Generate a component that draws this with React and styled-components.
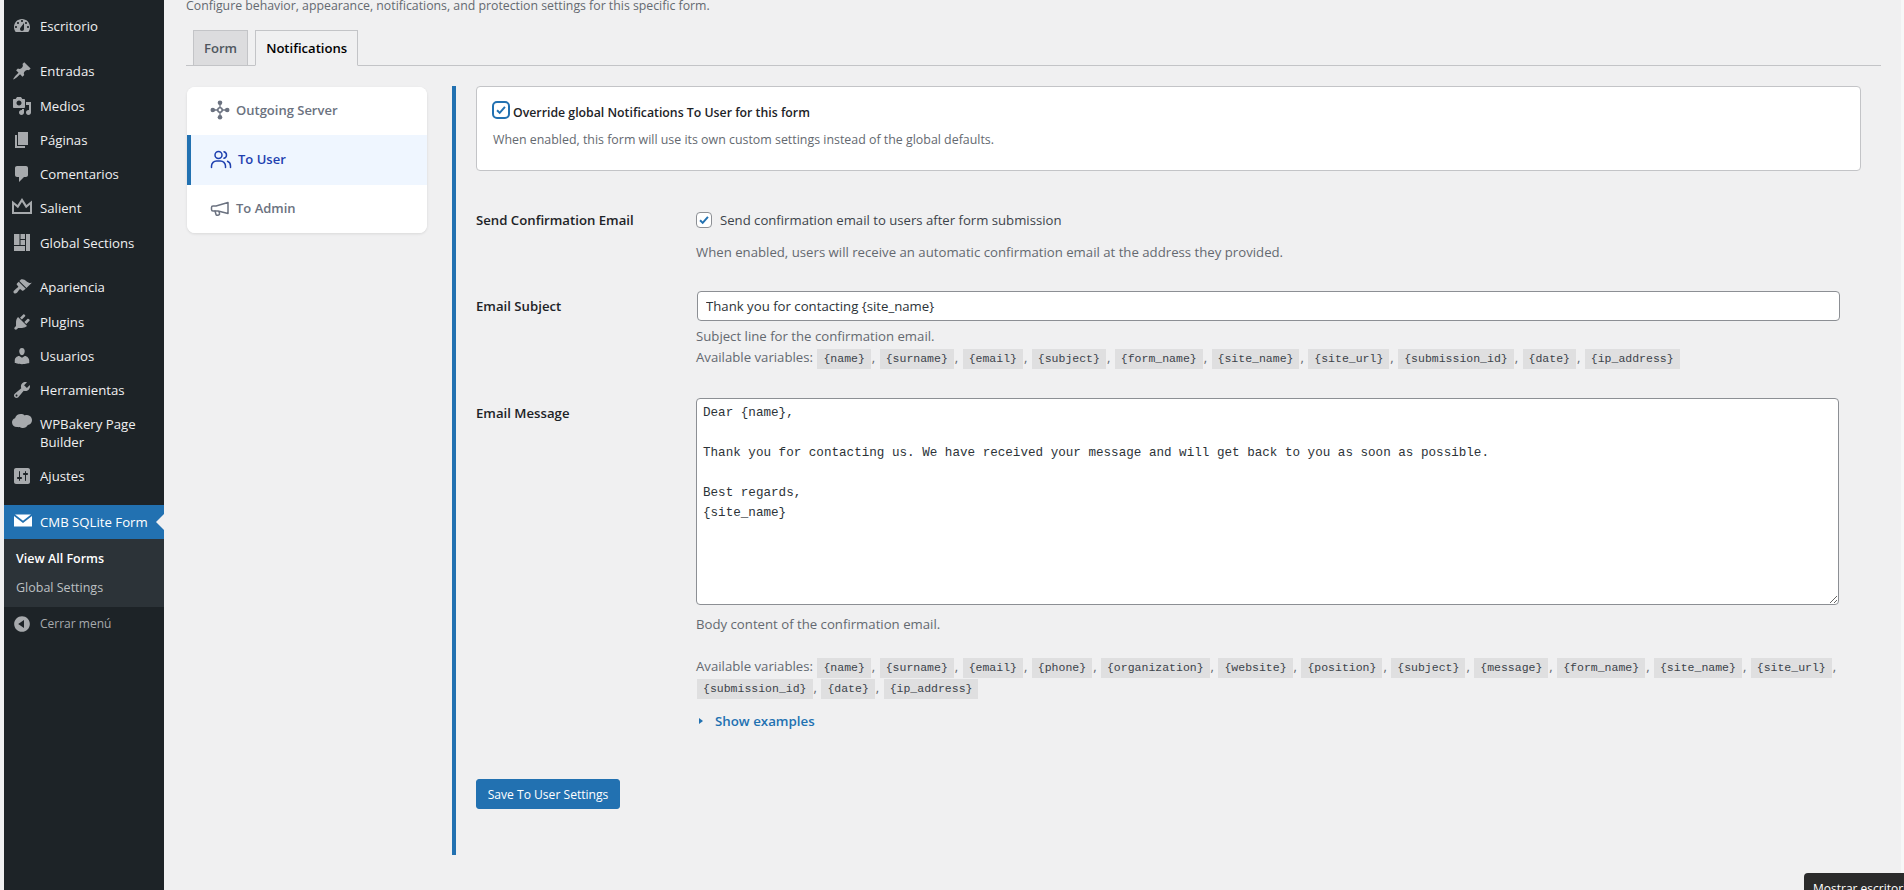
import { createGlobalStyle, styled } from "styled-components"

const GlobalStyle = createGlobalStyle`
    html, body {
        margin: 0;
        height: 100%;
        overflow: hidden;
        background-color: #f0f0f1;
    }
    * {
        box-sizing: border-box;
    }
`

const UI_FONT = `"Open Sans", "Noto Sans", sans-serif`
const MONO_FONT = `"Liberation Mono", monospace`

const menuGroups = [
    [{ label: "Escritorio", icon: "dashboard" }],
    [
        { label: "Entradas", icon: "pin" },
        { label: "Medios", icon: "media" },
        { label: "Páginas", icon: "page" },
        { label: "Comentarios", icon: "comment" },
        { label: "Salient", icon: "crown" },
        { label: "Global Sections", icon: "grid" },
    ],
    [
        { label: "Apariencia", icon: "brush" },
        { label: "Plugins", icon: "plugin" },
        { label: "Usuarios", icon: "user" },
        { label: "Herramientas", icon: "wrench" },
        { label: "WPBakery Page Builder", icon: "cloud" },
        { label: "Ajustes", icon: "sliders" },
    ],
]

const dashicons = {
    dashboard: "M3.76 16h12.48c1.1-1.37 1.76-3.11 1.76-5 0-4.42-3.58-8-8-8s-8 3.58-8 8c0 1.89.66 3.63 1.76 5zM10 4c.55 0 1 .45 1 1s-.45 1-1 1-1-.45-1-1 .45-1 1-1zM6 6c.55 0 1 .45 1 1s-.45 1-1 1-1-.45-1-1 .45-1 1-1zm8 0c.55 0 1 .45 1 1s-.45 1-1 1-1-.45-1-1 .45-1 1-1zm-5.37 5.55L12 7v6c0 1.1-.9 2-2 2s-2-.9-2-2c0-.57.24-1.08.63-1.45zM4 10c.55 0 1 .45 1 1s-.45 1-1 1-1-.45-1-1 .45-1 1-1zm12 0c.55 0 1 .45 1 1s-.45 1-1 1-1-.45-1-1 .45-1 1-1z",
    pin: "M10.44 3.02l1.82-1.82 6.36 6.35-1.83 1.82c-1.05-.68-2.48-.57-3.41.36l-.75.75c-.92.93-1.04 2.35-.35 3.41l-1.83 1.82-2.41-2.41-2.8 2.79c-.42.42-3.38 2.71-3.8 2.29s1.86-3.39 2.28-3.81l2.79-2.79L4.1 9.36l1.83-1.82c1.05.69 2.48.57 3.4-.36l.75-.75c.93-.92 1.05-2.35.36-3.41z",
    media: "M13 11V4c0-.55-.45-1-1-1h-1.67L9 1H5L3.67 3H2c-.55 0-1 .45-1 1v7c0 .55.45 1 1 1h10c.55 0 1-.45 1-1zM7 4.5c1.38 0 2.5 1.12 2.5 2.5S8.38 9.5 7 9.5 4.5 8.38 4.5 7 5.62 4.5 7 4.5zM14 6h5v10.5c0 1.38-1.12 2.5-2.5 2.5S14 17.88 14 16.5s1.12-2.5 2.5-2.5c.17 0 .34.02.5.05V9h-3V6zm-4 8.05V13h2v3.5c0 1.38-1.12 2.5-2.5 2.5S7 17.88 7 16.5 8.12 14 9.5 14c.17 0 .34.02.5.05z",
    page: "M6 15V2h10v13H6zm-1 1h8v2H3V5h2v11z",
    comment: "M5 2h9c1.1 0 2 .9 2 2v7c0 1.1-.9 2-2 2h-2l-5 5v-5H5c-1.1 0-2-.9-2-2V4c0-1.1.9-2 2-2z",
    crown: "M0 2.500L5.500 7 10 0l4.500 7L20 2.500V16H0zM2 6.800V14h16V6.800l-4 3.500L10 4 6 10.300z",
    grid: "M2 1h16v17H2zM7.500 1v11H2v1h11v5h1V1h-1v5H8.500V1zM8.500 7H13v5H8.500z",
    brush: "M14.48 11.06L7.41 3.99l1.5-1.5c.5-.56 2.3-.47 3.51.32 1.21.8 1.43 1.28 2.91 2.1 1.18.64 2.45 1.26 4.45.85zm-.71.71L6.7 4.7 4.93 6.47c-.39.39-.39 1.02 0 1.41l1.06 1.06c.39.39.39 1.03 0 1.42-.6.6-1.43 1.11-2.21 1.69-.35.26-.7.53-1.01.84C1.43 13.71.96 14.95 1.91 15.9c.95.95 2.2.49 3.05-.22.3-.31.58-.66.84-1.01.58-.78 1.09-1.61 1.69-2.21.39-.39 1.02-.39 1.41 0l1.06 1.06c.39.39 1.02.39 1.41 0z",
    plugin: "M13.11 4.36L9.87 7.6 8 5.73l3.24-3.24c.35-.34 1.05-.2 1.56.32.52.51.66 1.21.31 1.55zm-8 1.77l.91-1.12 9.01 9.01-1.19.84c-.71.71-2.63 1.16-3.82 1.16H6.14L4.9 17.26c-.59.59-1.54.59-2.12 0-.59-.58-.59-1.53 0-2.12l1.24-1.24v-3.88c0-1.13.4-3.19 1.09-3.89zm7.26 3.97l3.24-3.24c.34-.35 1.04-.21 1.55.31.52.51.66 1.21.31 1.55l-3.24 3.25z",
    user: "M10 9.25c-2.27 0-2.73-3.44-2.73-3.44C7 4.02 7.82 2 9.97 2c2.16 0 2.98 2.02 2.71 3.81 0 0-.41 3.44-2.68 3.44zm0 2.57L12.72 10c2.39 0 4.52 2.33 4.52 4.53v2.49s-3.65 1.13-7.24 1.13c-3.65 0-7.24-1.13-7.24-1.13v-2.49c0-2.25 1.94-4.48 4.47-4.48z",
    wrench: "M16.68 9.77c-1.34 1.34-3.3 1.67-4.95.99l-5.41 6.52c-.99.99-2.59.99-3.58 0s-.99-2.59 0-3.57l6.52-5.42c-.68-1.65-.35-3.61.99-4.95 1.28-1.28 3.12-1.62 4.72-1.06l-2.89 2.89 2.82 2.82 2.86-2.87c.53 1.58.18 3.39-1.08 4.65zM3.81 16.21c.4.39 1.04.39 1.43 0 .4-.4.4-1.04 0-1.43-.39-.4-1.03-.4-1.43 0-.39.39-.39 1.03 0 1.43z",
    cloud: "M5 13C2 13 0 11.200 0 8.300 0 6.300 1.200 4.800 3 4.200 3.800 1.600 6 0 8.800 0c1.500 0 2.900.5 4 1.400C13.500 1.100 14.300 1 15 1.100c2.800.2 5 2.400 5 5.100 0 2.500-1.800 4.500-4.200 4.800-1 2-2.700 3-4.800 3-1.200 0-2.400-.4-3.200-1-.9.300-1.800 0-2.800 0z",
    sliders: "M18 16V4c0-1.1-.9-2-2-2H4c-1.1 0-2 .9-2 2v12c0 1.1.9 2 2 2h12c1.1 0 2-.9 2-2zM8 11h1c.55 0 1 .45 1 1s-.45 1-1 1H8v1.5c0 .28-.22.5-.5.5s-.5-.22-.5-.5V13H6c-.55 0-1-.45-1-1s.45-1 1-1h1V5.500c0-.28.22-.5.5-.5s.5.22.5.5V11zm5-2h-1c-.55 0-1-.45-1-1s.45-1 1-1h1V5.500c0-.28.22-.5.5-.5s.5.22.5.5V7h1c.55 0 1 .45 1 1s-.45 1-1 1h-1v5.500c0 .28-.22.5-.5.5s-.5-.22-.5-.5V9z",
    mail: "M3 2.500h16l-8 6.300zM2 4l9 7 9-7v10.500H2z",
    collapse: "M10 2.160c4.330 0 7.840 3.510 7.840 7.840s-3.510 7.840-7.840 7.840S2.160 14.330 2.160 10 5.710 2.160 10 2.160zm2 11.720V6.120L6.180 9.970z",
}

const subjectVars = ["name", "surname", "email", "subject", "form_name", "site_name", "site_url", "submission_id", "date", "ip_address"]
const messageVars = ["name", "surname", "email", "phone", "organization", "website", "position", "subject", "message", "form_name", "site_name", "site_url", "submission_id", "date", "ip_address"]

const messageText = `Dear {name},

Thank you for contacting us. We have received your message and will get back to you as soon as possible.

Best regards,
{site_name}`

function Dashicon({ name }) {
    return (
        <svg width="20" height="20" viewBox="0 0 20 20" fill="currentColor" fillRule="evenodd" overflow="visible">
            <path d={dashicons[name]} />
        </svg>
    )
}

function ServerIcon() {
    return (
        <svg width="20" height="20" viewBox="0 0 20 20" fill="currentColor" stroke="currentColor" strokeWidth="1.3">
            <path d="M10 4v4M10 12v4M4 10h4M12 10h4" fill="none" />
            <circle cx="10" cy="2.800" r="2.300" stroke="none" />
            <circle cx="10" cy="17.200" r="2.300" stroke="none" />
            <circle cx="2.800" cy="10" r="2.300" stroke="none" />
            <circle cx="17.200" cy="10" r="2.300" stroke="none" />
            <circle cx="10" cy="10" r="2.200" fill="none" strokeWidth="1.600" />
        </svg>
    )
}

function UsersIcon() {
    return (
        <svg width="22" height="20" viewBox="0 0 22 20" fill="none" stroke="currentColor" strokeWidth="1.500" strokeLinecap="round">
            <circle cx="8.500" cy="6" r="3.500" />
            <path d="M1.500 18.500v-1.500c0-3 2.500-5 5-5h4c2.500 0 5 2 5 5v1.500" />
            <path d="M14 2.700c1.600.5 2.500 1.800 2.500 3.300s-.9 2.800-2.500 3.300" />
            <path d="M20.500 18.500v-1.500c0-2.200-1.100-3.900-3-4.700" />
        </svg>
    )
}

function MegaphoneIcon() {
    return (
        <svg width="20" height="20" viewBox="0 0 20 20" fill="none" stroke="currentColor" strokeWidth="1.500" strokeLinejoin="round" strokeLinecap="round">
            <path d="M18 4.500v11L8 13H3c-.8 0-1.500-.7-1.500-1.500v-2C1.500 8.700 2.200 8 3 8h3z" />
            <path d="M5 13l1 3.500c.2.700 1 1 1.700.8l1-.3c.7-.2 1-.9.800-1.500l-.4-1.500" />
        </svg>
    )
}

function Checkmark() {
    return (
        <svg width="100%" height="100%" viewBox="0 0 16 16" fill="none" stroke="#2271b1" strokeWidth="2.200">
            <path d="M3.500 8.300l3 3 6-7" />
        </svg>
    )
}

function VarChips({ names }) {
    return names.map((n, i) => (
        <span key={n}>
            <Chip>{`{${n}}`}</Chip>
            {i < names.length - 1 ? <Comma>, </Comma> : null}{" "}
        </span>
    ))
}

export default function App() {
    return (
        <>
            <GlobalStyle />
            <Shell>
                <Sidebar>
                    {menuGroups.map((group, g) => (
                        <MenuGroup key={g} $last={g === 1}>
                            {group.map((item) => (
                                <MenuItem key={item.label}>
                                    <MenuIcon><Dashicon name={item.icon} /></MenuIcon>
                                    <MenuLabel>{item.label}</MenuLabel>
                                </MenuItem>
                            ))}
                        </MenuGroup>
                    ))}
                    <ActiveItem>
                        <MenuIcon $white><Dashicon name="mail" /></MenuIcon>
                        <MenuLabel>CMB SQLite Form</MenuLabel>
                    </ActiveItem>
                    <SubMenu>
                        <SubItem $current>View All Forms</SubItem>
                        <SubItem>Global Settings</SubItem>
                    </SubMenu>
                    <CollapseItem>
                        <MenuIcon><Dashicon name="collapse" /></MenuIcon>
                        <MenuLabel>Cerrar menú</MenuLabel>
                    </CollapseItem>
                </Sidebar>

                <Main>
                    <Intro>Configure behavior, appearance, notifications, and protection settings for this specific form.</Intro>
                    <Tabs>
                        <Tab>Form</Tab>
                        <Tab $active>Notifications</Tab>
                    </Tabs>
                    <Columns>
                        <SideNav>
                            <SideNavItem><IconSlot><ServerIcon /></IconSlot>Outgoing Server</SideNavItem>
                            <SideNavItem $active><IconSlot><UsersIcon /></IconSlot>To User</SideNavItem>
                            <SideNavItem><IconSlot><MegaphoneIcon /></IconSlot>To Admin</SideNavItem>
                        </SideNav>
                        <Panel>
                            <OverrideBox>
                                <OverrideLabel>
                                    <FocusedCheck><Checkmark /></FocusedCheck>
                                    <OverrideText>Override global Notifications To User for this form</OverrideText>
                                </OverrideLabel>
                                <OverrideHelp>When enabled, this form will use its own custom settings instead of the global defaults.</OverrideHelp>
                            </OverrideBox>

                            <CheckRow>
                                <RowLabel $tight>Send Confirmation Email</RowLabel>
                                <div>
                                    <CheckLine>
                                        <CheckBox><Checkmark /></CheckBox>
                                        Send confirmation email to users after form submission
                                    </CheckLine>
                                    <CheckHelp>When enabled, users will receive an automatic confirmation email at the address they provided.</CheckHelp>
                                </div>
                            </CheckRow>

                            <SubjectRow>
                                <RowLabel>Email Subject</RowLabel>
                                <div>
                                    <TextInput defaultValue="Thank you for contacting {site_name}" />
                                    <HelpLine>Subject line for the confirmation email.</HelpLine>
                                    <SubjectVars>
                                        Available variables:{" "}
                                        <VarChips names={subjectVars} />
                                    </SubjectVars>
                                </div>
                            </SubjectRow>

                            <MessageRow>
                                <RowLabel>Email Message</RowLabel>
                                <div>
                                    <MessageArea defaultValue={messageText} />
                                    <MessageHelp>Body content of the confirmation email.</MessageHelp>
                                    <MessageVars>
                                        Available variables:{" "}
                                        <VarChips names={messageVars} />
                                    </MessageVars>
                                    <Examples><Caret />Show examples</Examples>
                                </div>
                            </MessageRow>

                            <SaveButton>Save To User Settings</SaveButton>
                        </Panel>
                    </Columns>
                </Main>
                <EdgeStrip />
            </Shell>
            <DesktopTip>Mostrar escritorio</DesktopTip>
        </>
    )
}

const Shell = styled.div`
    display: flex;
    height: 890px;
    overflow: hidden;
    font-family: ${UI_FONT};
    font-size: 13px;
    color: #3c434a;
`

const Sidebar = styled.nav`
    width: 160px;
    margin-left: 4px;
    flex-shrink: 0;
    padding-top: 9px;
    background-color: #1d2327;
`

const MenuGroup = styled.div`
    margin-bottom: ${(p) => (p.$last ? "10.5px" : "11px")};
`

const MenuItem = styled.div`
    display: flex;
    align-items: flex-start;
    min-height: 34.25px;
    padding: 7px 4px 7px 0;
    color: #f0f0f1;
    font-size: 13.2px;
    line-height: 18px;
`

const MenuIcon = styled.span`
    width: 36px;
    padding-left: 8px;
    flex-shrink: 0;
    height: 20px;
    color: ${(p) => (p.$white ? "#ffffff" : "#a7aaad")};
    svg {
        display: block;
    }
`

const MenuLabel = styled.span`
    flex: 1;
    padding: 1px 0;
`

const ActiveItem = styled(MenuItem)`
    position: relative;
    min-height: 34px;
    margin-top: 1px;
    background-color: #2271b1;
    color: #ffffff;

    &::after {
        content: "";
        position: absolute;
        right: 0;
        top: 9px;
        border: 8px solid transparent;
        border-right-color: #f0f0f1;
        border-left-width: 0;
    }
`

const SubMenu = styled.div`
    padding: 5.5px 0 4.5px;
    background-color: #2c3338;
`

const SubItem = styled.div`
    padding: 5.5px 12px;
    line-height: 18px;
    font-size: 12.5px;
    font-weight: ${(p) => (p.$current ? 600 : 400)};
    color: ${(p) => (p.$current ? "#ffffff" : "#bdc0c3")};
`

const CollapseItem = styled(MenuItem)`
    color: #a7aaad;
    font-size: 12px;
`

const Main = styled.main`
    flex: 1;
    min-width: 0;
    margin-top: -3px;
    padding: 0 20px 0 22px;
`

const EdgeStrip = styled.div`
    width: 3px;
    flex-shrink: 0;
    background-color: #f7f7f7;
`

const Intro = styled.p`
    margin: 0;
    line-height: 18px;
    font-size: 12.3px;
    color: #646970;
`

const Tabs = styled.div`
    display: flex;
    gap: 7px;
    height: 48px;
    margin-top: 3px;
    padding: 12px 0 0 7px;
    border-bottom: 1px solid #c3c4c7;
`

const Tab = styled.div`
    height: 36px;
    padding: 0 10px;
    display: flex;
    align-items: center;
    border: 1px solid #c3c4c7;
    font-size: 13.1px;
    font-weight: 600;
    color: ${(p) => (p.$active ? "#000000" : "#50575e")};
    background-color: ${(p) => (p.$active ? "#f0f0f1" : "#dcdcde")};
    border-bottom-color: ${(p) => (p.$active ? "#f0f0f1" : "#c3c4c7")};
`

const Columns = styled.div`
    display: flex;
    align-items: flex-start;
    padding-top: 20px;
`

const SideNav = styled.div`
    width: 240px;
    margin: 1px 25px 0 1px;
    flex-shrink: 0;
    overflow: hidden;
    background-color: #ffffff;
    border-radius: 8px;
    box-shadow: 0 1px 3px rgba(0, 0, 0, 0.1);
`

const SideNavItem = styled.div`
    display: flex;
    align-items: center;
    gap: 6px;
    height: ${(p) => (p.$active ? "50px" : "48px")};
    padding-left: ${(p) => (p.$active ? "19px" : "23px")};
    padding-bottom: 2px;
    border-left: ${(p) => (p.$active ? "4px solid #2271b1" : "none")};
    background-color: ${(p) => (p.$active ? "#eff6ff" : "#ffffff")};
    color: ${(p) => (p.$active ? "#1e40af" : "#6b7280")};
    font-size: 13px;
    font-weight: 600;
`

const IconSlot = styled.span`
    display: flex;
    flex-shrink: 0;
`

const Panel = styled.section`
    flex: 1;
    min-width: 0;
    height: 769px;
    margin-right: 20px;
    padding: 0 0 0 20px;
    border-left: 4px solid #2271b1;
`

const OverrideBox = styled.div`
    height: 85px;
    padding: 14px 15px;
    background-color: #ffffff;
    border: 1px solid #c3c4c7;
    border-radius: 4px;
`

const OverrideLabel = styled.div`
    display: flex;
    align-items: flex-start;
    gap: 3px;
    height: 20px;
    color: #1d2327;
`

const OverrideText = styled.span`
    margin-top: 2px;
    font-size: 12.3px;
    font-weight: 600;
    line-height: 20px;
`

const OverrideHelp = styled.p`
    margin: 9px 0 0 1px;
    line-height: 20px;
    font-size: 12.4px;
    color: #646970;
`

const FormRow = styled.div`
    display: grid;
    grid-template-columns: 220px minmax(0, 1fr);
`

const CheckRow = styled(FormRow)`
    margin-top: 37px;
`

const SubjectRow = styled(FormRow)`
    margin-top: 29px;
`

const MessageRow = styled(FormRow)`
    margin-top: 31px;
`

const RowLabel = styled.div`
    padding-top: ${(p) => (p.$tight ? "2px" : "5px")};
    font-size: 13.2px;
    font-weight: 600;
    line-height: 20px;
    color: #1d2327;
`

const CheckLine = styled.div`
    display: flex;
    align-items: center;
    gap: 8px;
    height: 24px;
    font-size: 13.15px;
    color: #3c434a;
`

const CheckBox = styled.span`
    width: 16px;
    height: 16px;
    display: block;
    background-color: #ffffff;
    border: 1px solid #8c8f94;
    border-radius: 4px;
`

const FocusedCheck = styled(CheckBox)`
    width: 18px;
    height: 18px;
    border: 2px solid #2271b1;
    border-radius: 5px;
`

const CheckHelp = styled.p`
    margin: 10px 0 0;
    line-height: 20px;
    font-size: 13.2px;
    color: #646970;
`

const TextInput = styled.input`
    display: block;
    width: 1143px;
    height: 30px;
    margin-left: 1px;
    padding: 0 8px;
    border: 1px solid #8c8f94;
    border-radius: 4px;
    background-color: #ffffff;
    font-family: ${UI_FONT};
    font-size: 13.2px;
    color: #2c3338;
`

const HelpLine = styled.p`
    margin: 5px 0 0;
    line-height: 20px;
    font-size: 13.2px;
    color: #646970;
`

const SubjectVars = styled(HelpLine)`
    margin-top: 1px;
`

const MessageHelp = styled(HelpLine)`
    margin-top: 9px;
`

const MessageVars = styled(HelpLine)`
    margin-top: 22px;
    line-height: 21px;
`

const Chip = styled.code`
    padding: 3px 6px 4px;
    margin: 0 1px;
    background-color: rgba(0, 0, 0, 0.07);
    font-family: ${MONO_FONT};
    font-size: 11.5px;
    line-height: 1;
    color: #3c434a;
`

const Comma = styled.span`
    color: #646970;
`

const MessageArea = styled.textarea`
    display: block;
    width: 1143px;
    height: 207px;
    padding: 4px 6px;
    border: 1px solid #8c8f94;
    border-radius: 4px;
    background-color: #ffffff;
    font-family: ${MONO_FONT};
    font-size: 12.6px;
    line-height: 20px;
    color: #2c3338;
`

const Examples = styled.div`
    display: flex;
    align-items: center;
    margin-top: 13px;
    font-size: 13.3px;
    font-weight: 600;
    line-height: 20px;
    color: #2271b1;
`

const Caret = styled.span`
    width: 0;
    height: 0;
    margin: 0 12px 0 3px;
    border-left: 4px solid #2271b1;
    border-top: 3px solid transparent;
    border-bottom: 3px solid transparent;
`

const SaveButton = styled.button`
    display: block;
    width: 144px;
    height: 30px;
    margin-top: 48px;
    padding: 0;
    background-color: #2271b1;
    border: 1px solid #2271b1;
    border-radius: 3px;
    font-family: ${UI_FONT};
    font-size: 12.1px;
    color: #ffffff;
`

const DesktopTip = styled.div`
    position: fixed;
    left: 1804px;
    top: 873px;
    width: 120px;
    height: 30px;
    padding: 7px 9px;
    background-color: #2b2b2b;
    border-radius: 4px 0 0 0;
    font-family: ${UI_FONT};
    font-size: 12px;
    color: #ffffff;
    white-space: nowrap;
`
